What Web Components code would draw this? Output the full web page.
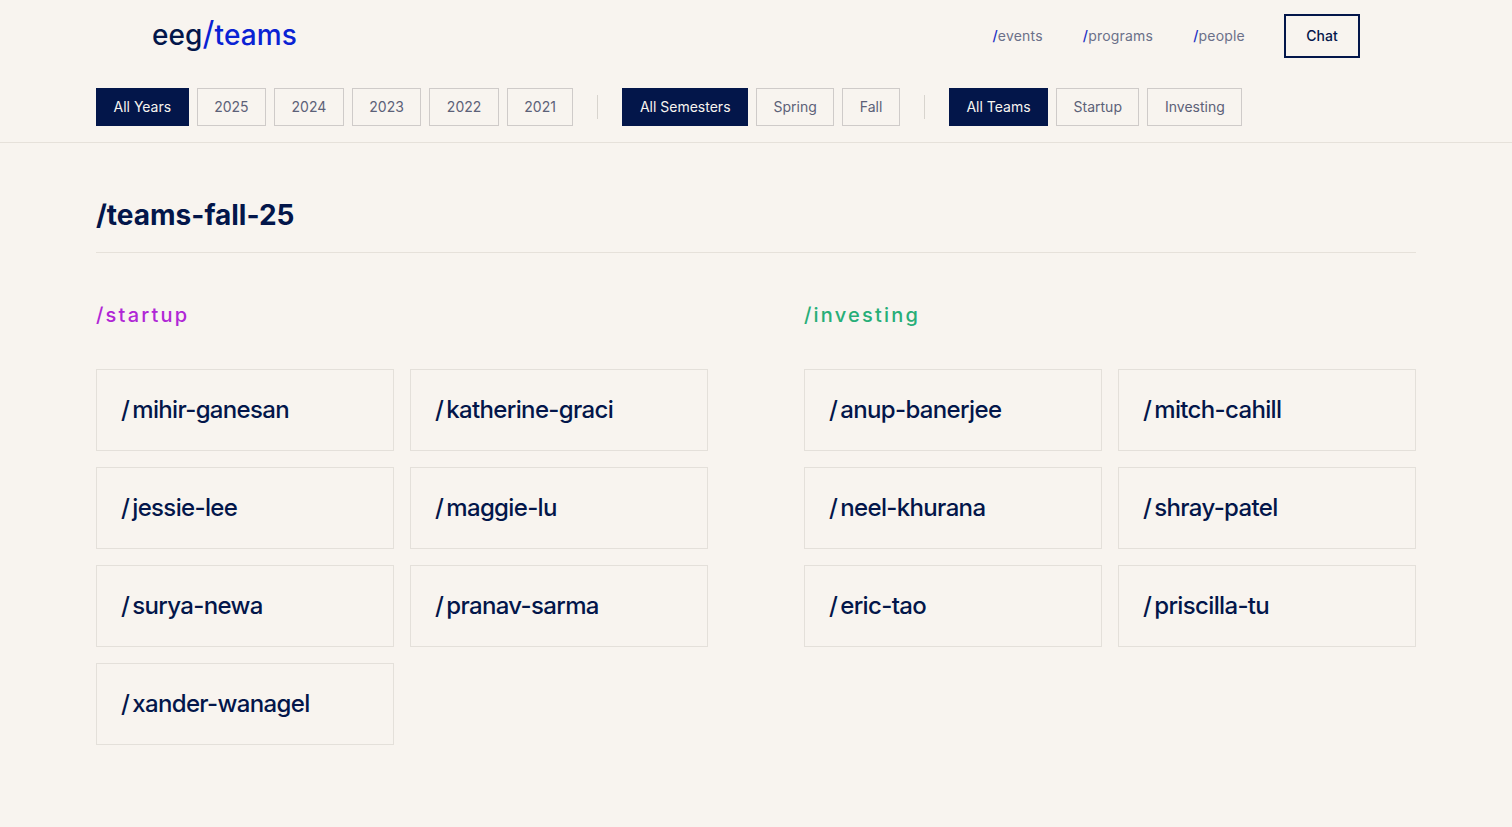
<!DOCTYPE html>
<html lang="en">
<head>
<meta charset="utf-8">
<title>eeg/teams</title>
<style>
    html, body { margin: 0; background: #f8f4ef; }
    body { font-family: Inter, "Liberation Sans", sans-serif; color: #03164a; }
</style>
</head>
<body>
<site-header></site-header>
<filter-bar></filter-bar>
<teams-page heading="/teams-fall-25">
    <team-section name="/startup" color="#b026d6">
        <team-card>mihir-ganesan</team-card>
        <team-card>katherine-graci</team-card>
        <team-card>jessie-lee</team-card>
        <team-card>maggie-lu</team-card>
        <team-card>surya-newa</team-card>
        <team-card>pranav-sarma</team-card>
        <team-card>xander-wanagel</team-card>
    </team-section>
    <team-section name="/investing" color="#27ae78">
        <team-card>anup-banerjee</team-card>
        <team-card>mitch-cahill</team-card>
        <team-card>neel-khurana</team-card>
        <team-card>shray-patel</team-card>
        <team-card>eric-tao</team-card>
        <team-card>priscilla-tu</team-card>
    </team-section>
</teams-page>

<script>
class SiteHeader extends HTMLElement {
    constructor() {
        super();
        this.shadow = this.attachShadow({mode: 'open'});
        this.shadow.innerHTML = `
        <style>
            :host { display: block; padding-top: 14px; }
            .top {
                display: flex;
                justify-content: space-between;
                align-items: center;
                height: 44px;
                padding: 0 152px;
            }
            .logo {
                font-size: 28px;
                line-height: 34px;
                margin-bottom: 3px;
                font-weight: 500;
                letter-spacing: 0.1px;
                color: #03164a;
            }
            .logo span { color: #0a22d4; }
            .logo .slash { font-size: 33px; font-weight: 400; line-height: 0; }
            nav { display: flex; align-items: center; }
            nav a {
                font-size: 14px;
                line-height: 20px;
                letter-spacing: 0.2px;
                color: #6b7089;
                margin-right: 40px;
            }
            nav a:nth-child(3) { margin-right: 39px; }
            nav a span { color: #1c2fc4; font-weight: 500; }
            .chat {
                box-sizing: border-box;
                width: 76px;
                height: 44px;
                display: flex;
                align-items: center;
                justify-content: center;
                padding-bottom: 1px;
                border: 2px solid #03164a;
                font-size: 14px;
                font-weight: 500;
                color: #03164a;
            }
        </style>
        <div class="top">
            <div class="logo">eeg<span class="slash">/</span><span>teams</span></div>
            <nav>
                <a><span>/</span>events</a>
                <a><span>/</span>programs</a>
                <a><span>/</span>people</a>
                <div class="chat">Chat</div>
            </nav>
        </div>
        `;
    }
}

class FilterChip extends HTMLElement {
    constructor() {
        super();
        this.shadow = this.attachShadow({mode: 'open'});
        this.shadow.innerHTML = `
        <style>
            :host {
                display: flex;
                box-sizing: border-box;
                height: 38px;
                align-items: center;
                padding: 0 16.5px 2px;
                border: 1px solid #cfcbc9;
                font-size: 14px;
                color: #5c6178;
            }
            :host([active]) {
                background: #03164a;
                border-color: #03164a;
                color: #f8f4ef;
            }
        </style>
        <slot></slot>
        `;
    }
}

class FilterBar extends HTMLElement {
    constructor() {
        super();
        this.shadow = this.attachShadow({mode: 'open'});
        this.shadow.innerHTML = `
        <style>
            :host {
                display: flex;
                align-items: center;
                gap: 8px;
                margin-top: 30px;
                padding: 0 96px 16px;
                border-bottom: 1px solid #e6e1da;
            }
            .sep {
                width: 1px;
                height: 24px;
                margin: 0 16px;
                background: #d8d4ce;
            }
        </style>
        <filter-chip active>All Years</filter-chip>
        <filter-chip>2025</filter-chip>
        <filter-chip>2024</filter-chip>
        <filter-chip>2023</filter-chip>
        <filter-chip>2022</filter-chip>
        <filter-chip>2021</filter-chip>
        <div class="sep"></div>
        <filter-chip active>All Semesters</filter-chip>
        <filter-chip>Spring</filter-chip>
        <filter-chip>Fall</filter-chip>
        <div class="sep"></div>
        <filter-chip active>All Teams</filter-chip>
        <filter-chip>Startup</filter-chip>
        <filter-chip>Investing</filter-chip>
        `;
    }
}

class TeamsPage extends HTMLElement {
    constructor() {
        super();
        this.shadow = this.attachShadow({mode: 'open'});
        this.shadow.innerHTML = `
        <style>
            :host { display: block; padding: 0 96px; }
            h1 {
                margin: 0;
                padding: 54px 0 19px;
                font-size: 28px;
                line-height: 36px;
                font-weight: 700;
                letter-spacing: 0;
                color: #03164a;
                border-bottom: 1px solid #e6e1da;
            }
            .cols {
                display: grid;
                grid-template-columns: 1fr 1fr;
                gap: 96px;
                padding-top: 48px;
            }
        </style>
        <h1></h1>
        <div class="cols"><slot></slot></div>
        `;
        this.shadow.querySelector("h1").textContent = this.getAttribute("heading");
    }
}

class TeamSection extends HTMLElement {
    constructor() {
        super();
        this.shadow = this.attachShadow({mode: 'open'});
        this.shadow.innerHTML = `
        <style>
            :host { display: block; }
            h2 {
                margin: 0 0 40px;
                font-size: 20px;
                line-height: 28px;
                font-weight: 450;
                letter-spacing: 2.2px;
            }
            .grid {
                display: grid;
                grid-template-columns: 1fr 1fr;
                gap: 16px;
            }
        </style>
        <h2></h2>
        <div class="grid"><slot></slot></div>
        `;
        let title = this.shadow.querySelector("h2");
        title.textContent = this.getAttribute("name");
        title.style.color = this.getAttribute("color");
    }
}

class TeamCard extends HTMLElement {
    constructor() {
        super();
        this.shadow = this.attachShadow({mode: 'open'});
        this.shadow.innerHTML = `
        <style>
            :host {
                display: flex;
                box-sizing: border-box;
                height: 82px;
                align-items: center;
                padding: 0 24px 1px 25px;
                border: 1px solid #e4e0da;
                font-size: 24px;
                font-weight: 450;
                letter-spacing: -0.65px;
                color: #03164a;
            }
            .slash { margin-right: 3px; margin-left: -1px; }
        </style>
        <span class="slash">/</span><slot></slot>
        `;
    }
}

customElements.define('site-header', SiteHeader);
customElements.define('filter-chip', FilterChip);
customElements.define('filter-bar', FilterBar);
customElements.define('teams-page', TeamsPage);
customElements.define('team-section', TeamSection);
customElements.define('team-card', TeamCard);
</script>
</body>
</html>
